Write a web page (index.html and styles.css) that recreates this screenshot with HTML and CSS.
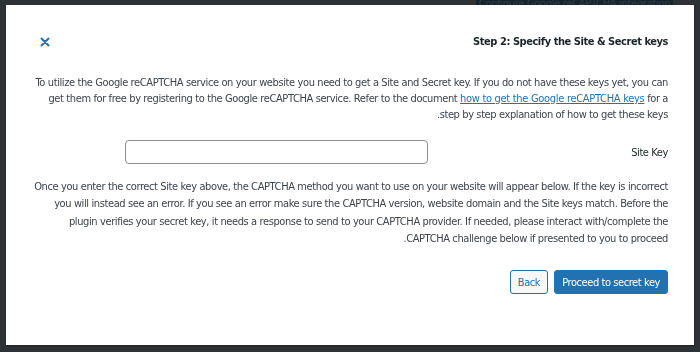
FILE: index.html
```html
<!DOCTYPE html>
<html lang="en">
<head>
  <meta charset="UTF-8" />
  <meta name="viewport" content="width=device-width, initial-scale=1" />
  <title>reCAPTCHA setup</title>
  <link rel="stylesheet" href="styles.css">
</head>
<body>

  <!-- Page behind the overlay -->
  <div class="page">
    <button class="page-button" type="button">Configure Google reCAPTCHA integration</button>
  </div>

  <!-- Modal -->
  <div class="modal" dir="rtl">
    <div class="modal-header">
      <h2 class="modal-title">Step 2: Specify the Site &amp; Secret keys</h2>
      <button class="modal-close" type="button" aria-label="Close">
        <svg width="10" height="10" viewBox="0 0 10 10" aria-hidden="true">
          <path d="M1.5 1.5 L8.5 8.5 M8.5 1.5 L1.5 8.5" stroke="#2271b1" stroke-width="2" stroke-linecap="round" fill="none" />
        </svg>
      </button>
    </div>

    <p class="modal-text">
      To utilize the Google reCAPTCHA service on your website you need to get a Site and Secret key. If you do not have these keys yet, you can get them for free by registering to the Google reCAPTCHA service. Refer to the document <a href="#">how to get the Google reCAPTCHA keys</a> for a step by step explanation of how to get these keys.
    </p>

    <div class="field-row">
      <label class="field-label" for="site-key">Site Key</label>
      <input id="site-key" class="field-input" type="text" />
    </div>

    <p class="modal-text modal-text-loose">
      Once you enter the correct Site key above, the CAPTCHA method you want to use on your website will appear below. If the key is incorrect you will instead see an error. If you see an error make sure the CAPTCHA version, website domain and the Site keys match. Before the plugin verifies your secret key, it needs a response to send to your CAPTCHA provider. If needed, please interact with/complete the CAPTCHA challenge below if presented to you to proceed.
    </p>

    <div class="modal-actions">
      <button class="btn btn-primary" type="button">Proceed to secret key</button>
      <button class="btn btn-secondary" type="button">Back</button>
    </div>
  </div>

</body>
</html>
```

FILE: styles.css
```css
body {
  margin: 0;
  font-family: 'DejaVu Sans Condensed', 'DejaVu Sans', sans-serif;
  background-color: #2d3236;
  color: #3c434a;
  height: 352px;
  overflow: hidden;
}

/* Page behind overlay */
.page {
  display: flex;
  justify-content: flex-end;
  padding-right: 27px;
}

.page-button {
  background-color: #16242e;
  color: #2c3d4a;
  border: none;
  font-family: inherit;
  font-size: 11px;
  letter-spacing: -0.3px;
  width: 197px;
  height: 18px;
  margin-top: -6px;
  padding: 0;
}

/* Modal */
.modal {
  position: fixed;
  top: 5px;
  left: 6px;
  right: 6px;
  bottom: 7px;
  background-color: #fff;
  box-shadow: 0 1px 2px rgba(0, 0, 0, 0.3);
  padding: 0 26px 0 28px;
  box-sizing: border-box;
}

.modal-header {
  display: flex;
  justify-content: space-between;
  align-items: center;
  height: 67px;
  margin-top: 3px;
}

.modal-title {
  margin: 0;
  font-size: 11px;
  letter-spacing: -0.45px;
  font-weight: bold;
  color: #1d2327;
}

.modal-close {
  background: none;
  border: none;
  padding: 0;
  margin-left: 6px;
  width: 10px;
  height: 10px;
  cursor: pointer;
  display: flex;
}

.modal-text {
  margin: 0;
  font-size: 11px;
  letter-spacing: -0.39px;
  line-height: 16px;
}

.modal-text-loose {
  line-height: 17.3px;
}

.modal-text a {
  color: #2271b1;
  letter-spacing: -0.3px;
}

/* Site key row */
.field-row {
  display: flex;
  align-items: center;
  padding: 17px 0 14px;
}

.field-label {
  font-size: 11px;
  letter-spacing: -0.4px;
  color: #1d2327;
  width: 240px;
}

.field-input {
  width: 303px;
  height: 24px;
  box-sizing: border-box;
  border: 1px solid #8c8f94;
  border-radius: 4px;
  background: #fff;
}

/* Actions */
.modal-actions {
  display: flex;
  gap: 6px;
  margin-top: 23px;
}

.btn {
  font-family: inherit;
  font-size: 11px;
  letter-spacing: -0.42px;
  height: 24px;
  padding: 0 7px;
  border-radius: 3px;
  cursor: pointer;
}

.btn-primary {
  background-color: #2271b1;
  border: 1px solid #2271b1;
  color: #fff;
}

.btn-secondary {
  background-color: #f6f7f7;
  border: 1px solid #2271b1;
  color: #2271b1;
}
```
